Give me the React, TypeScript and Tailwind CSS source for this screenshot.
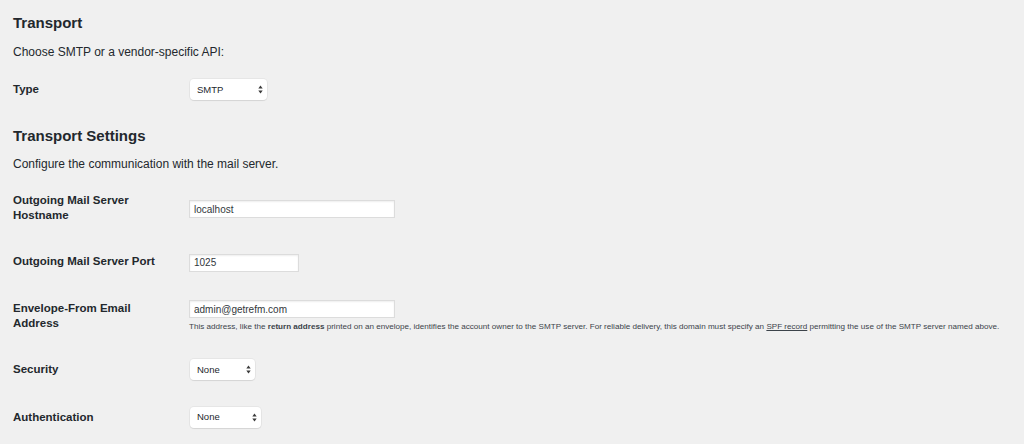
import React from "react";

interface SelectProps {
    value: string;
    width: string;
}

// select box drawn by hand so the text sits centred like the reference
function MiniSelect({ value, width }: SelectProps) {
    return (
        <div
            role="combobox"
            className={`ml-[1px] flex h-[21px] ${width} items-center justify-between rounded-[4px] bg-white pl-[7px] pr-[4px] shadow-[0_0_0_1px_rgba(0,0,0,0.04),0_1px_1px_rgba(0,0,0,0.08)]`}
        >
            <span className="text-[9.5px] leading-[12px] text-[#23282d]">{value}</span>
            <svg width="5" height="9" viewBox="0 0 5 9">
                <path d="M2.5 0.5 L4.7 3.6 L0.3 3.6 Z" fill="#3a3a3a" />
                <path d="M2.5 8.5 L4.7 5.4 L0.3 5.4 Z" fill="#3a3a3a" />
            </svg>
        </div>
    );
}

function TextInput({ value, width }: { value: string; width: string }) {
    return (
        <input
            type="text"
            defaultValue={value}
            className={`h-[18px] ${width} border border-[#dcdcdc] bg-white px-[4px] text-[10px] text-[#32373c] shadow-[inset_0_1px_2px_rgba(0,0,0,0.07)] outline-none`}
        />
    );
}

function Row({ label, height, children }: { label: string; height: string; children: React.ReactNode }) {
    return (
        <div className={`flex items-center ${height}`}>
            <div className="w-[176px] shrink-0 pr-[26px] text-[11.5px] font-bold leading-[15px] text-[#23282d]">
                {label}
            </div>
            <div>{children}</div>
        </div>
    );
}

export default function App() {
    return (
        <div
            className="h-[444px] w-[1024px] overflow-hidden bg-[#f0f0f0] pl-[13px] pt-[13px] text-[#23282d]"
            style={{ fontFamily: '"Liberation Sans", Arial, Helvetica, sans-serif' }}
        >
            <h2 className="text-[15px] font-bold leading-[20px]">Transport</h2>
            <p className="mt-[11px] text-[12px] leading-[16px]">Choose SMTP or a vendor-specific API:</p>

            <div className="mt-[19px] flex h-[21px] items-center">
                <div className="w-[176px] shrink-0 text-[11.5px] font-bold leading-[15px]">Type</div>
                <MiniSelect value="SMTP" width="w-[77px]" />
            </div>

            <h2 className="mt-[26px] text-[15px] font-bold leading-[20px]">Transport Settings</h2>
            <p className="mt-[10px] text-[12px] leading-[16px]">Configure the communication with the mail server.</p>

            <div className="mt-[9px]">
                <Row label="Outgoing Mail Server Hostname" height="h-[53px]">
                    <TextInput value="localhost" width="w-[206px]" />
                </Row>
                <Row label="Outgoing Mail Server Port" height="h-[54px]">
                    <TextInput value="1025" width="w-[110px]" />
                </Row>
                <Row label="Envelope-From Email Address" height="h-[55px]">
                    <div className="flex flex-col pt-[1px]">
                        <TextInput value="admin@getrefm.com" width="w-[206px]" />
                        <p className="mt-[3px] whitespace-nowrap text-[8.1px] leading-[11px] text-[#3c434a]">
                            This address, like the <b>return address</b> printed on an envelope, identifies the account
                            owner to the SMTP server. For reliable delivery, this domain must specify an{" "}
                            <a href="#" className="underline">SPF record</a> permitting the use of the SMTP server named
                            above.
                        </p>
                    </div>
                </Row>
                <Row label="Security" height="h-[53px]">
                    <MiniSelect value="None" width="w-[65px]" />
                </Row>
                <Row label="Authentication" height="h-[42px]">
                    <MiniSelect value="None" width="w-[71px]" />
                </Row>
            </div>
        </div>
    );
}
